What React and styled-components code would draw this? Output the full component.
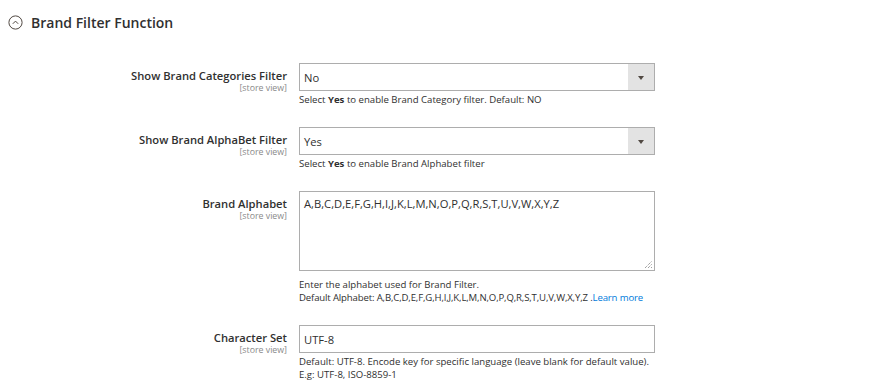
import React from 'react';
import styled, { createGlobalStyle } from 'styled-components';

const GlobalStyle = createGlobalStyle`
  body {
    margin: 0;
    background: #fff;
    font-family: 'Open Sans', 'Noto Sans', sans-serif;
    color: #303030;
  }
`;

const Page = styled.div`
  width: 890px;
  height: 391px;
  overflow: hidden;
  background: #fff;
`;

const SectionTitle = styled.div`
  display: flex;
  align-items: center;
  gap: 8px;
  padding: 12px 0 0 8px;
  height: 20px;
  font-size: 14px;
  font-weight: 600;
  color: #303030;
  margin-bottom: 31px;
`;

const Fieldset = styled.div`
  display: flex;
  flex-direction: column;
  gap: 21px;
`;

const Row = styled.div`
  display: grid;
  grid-template-columns: 287px 356px;
  column-gap: 12px;
  align-items: start;
`;

const LabelCell = styled.div`
  text-align: right;
  padding-top: 5px;
`;

const LabelText = styled.div`
  font-size: 11.2px;
  font-weight: 600;
  line-height: 15px;
  color: #303030;
`;

const Scope = styled.div`
  font-size: 8.8px;
  line-height: 11px;
  color: #8a8a8a;
`;

const Control = styled.div`
  display: flex;
  flex-direction: column;
`;

const SelectBox = styled.div`
  display: flex;
  height: 28px;
  box-sizing: border-box;
  border: 1px solid #adadad;
  background: #fff;
`;

const SelectValue = styled.div`
  flex: 1;
  display: flex;
  align-items: center;
  padding-left: 4px;
  font-size: 11.2px;
  color: #303030;
`;

const SelectAction = styled.div`
  width: 26px;
  background: #e3e3e3;
  display: flex;
  align-items: center;
  justify-content: center;
`;

const Arrow = styled.span`
  width: 0;
  height: 0;
  border-left: 3.5px solid transparent;
  border-right: 3.5px solid transparent;
  border-top: 4px solid #514943;
  margin-top: 1px;
`;

const TextInput = styled.div`
  height: 28px;
  box-sizing: border-box;
  border: 1px solid #adadad;
  display: flex;
  align-items: center;
  padding-left: 4px;
  font-size: 11.2px;
  color: #303030;
`;

const TextArea = styled.div`
  position: relative;
  height: 80px;
  box-sizing: border-box;
  border: 1px solid #adadad;
  padding: 5px 4px;
  font-size: 11.2px;
  line-height: 14px;
  color: #303030;
  margin-bottom: 5px;
`;

const Grip = styled.svg`
  position: absolute;
  right: 1px;
  bottom: 1px;
`;

const Note = styled.div`
  margin-top: 2px;
  font-size: 9.6px;
  line-height: 13px;
  color: #303030;
  white-space: nowrap;
  b {
    font-weight: 700;
  }
  a {
    color: #007bdb;
    text-decoration: none;
  }
`;

const TightLine = styled.span`
  letter-spacing: -0.15px;
`;

const CollapseIcon = () => (
  <svg width="15" height="15" viewBox="0 0 15 15">
    <circle cx="7.5" cy="7.5" r="6.6" fill="none" stroke="#514943" strokeWidth="1" />
    <path d="M4.8 8.8 L7.5 6.1 L10.2 8.8" fill="none" stroke="#514943" strokeWidth="1" />
  </svg>
);

const Label = ({ children }) => (
  <LabelCell>
    <LabelText>{children}</LabelText>
    <Scope>[store view]</Scope>
  </LabelCell>
);

const Select = ({ value }) => (
  <SelectBox>
    <SelectValue>{value}</SelectValue>
    <SelectAction>
      <Arrow />
    </SelectAction>
  </SelectBox>
);

export default function App() {
  return (
    <Page>
      <GlobalStyle />
      <SectionTitle>
        <CollapseIcon />
        Brand Filter Function
      </SectionTitle>
      <Fieldset>
        <Row>
          <Label>Show Brand Categories Filter</Label>
          <Control>
            <Select value="No" />
            <Note>
              Select <b>Yes</b> to enable Brand Category filter. Default: NO
            </Note>
          </Control>
        </Row>
        <Row>
          <Label>Show Brand AlphaBet Filter</Label>
          <Control>
            <Select value="Yes" />
            <Note>
              Select <b>Yes</b> to enable Brand Alphabet filter
            </Note>
          </Control>
        </Row>
        <Row>
          <Label>Brand Alphabet</Label>
          <Control>
            <TextArea>
              A,B,C,D,E,F,G,H,I,J,K,L,M,N,O,P,Q,R,S,T,U,V,W,X,Y,Z
              <Grip width="9" height="9" viewBox="0 0 9 9">
                <path d="M1 8 L8 1 M4 8 L8 4 M7 8 L8 7" stroke="#555" strokeWidth="0.8" strokeDasharray="1 1" />
              </Grip>
            </TextArea>
            <Note>
              Enter the alphabet used for Brand Filter.
              <br />
              <TightLine>
                Default Alphabet: A,B,C,D,E,F,G,H,I,J,K,L,M,N,O,P,Q,R,S,T,U,V,W,X,Y,Z .<a href="#">Learn more</a>
              </TightLine>
            </Note>
          </Control>
        </Row>
        <Row>
          <Label>Character Set</Label>
          <Control>
            <TextInput>UTF-8</TextInput>
            <Note>
              Default: UTF-8. Encode key for specific language (leave blank for default value).
              <br />
              E.g: UTF-8, ISO-8859-1
            </Note>
          </Control>
        </Row>
      </Fieldset>
    </Page>
  );
}
